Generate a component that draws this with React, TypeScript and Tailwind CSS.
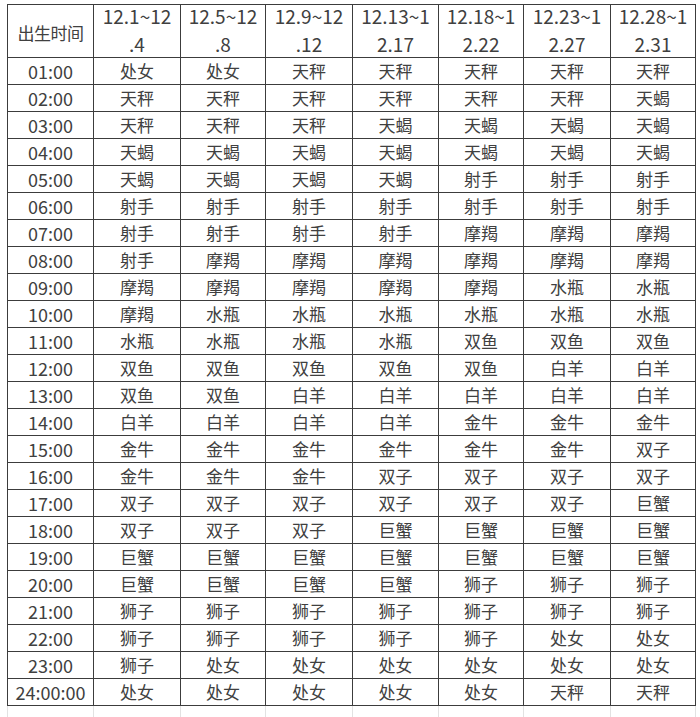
import React from 'react';

const headers = [
  ['12.1~12', '.4'],
  ['12.5~12', '.8'],
  ['12.9~12', '.12'],
  ['12.13~1', '2.17'],
  ['12.18~1', '2.22'],
  ['12.23~1', '2.27'],
  ['12.28~1', '2.31'],
];

const rows: [string, string[]][] = [
  ['01:00', ['处女', '处女', '天秤', '天秤', '天秤', '天秤', '天秤']],
  ['02:00', ['天秤', '天秤', '天秤', '天秤', '天秤', '天秤', '天蝎']],
  ['03:00', ['天秤', '天秤', '天秤', '天蝎', '天蝎', '天蝎', '天蝎']],
  ['04:00', ['天蝎', '天蝎', '天蝎', '天蝎', '天蝎', '天蝎', '天蝎']],
  ['05:00', ['天蝎', '天蝎', '天蝎', '天蝎', '射手', '射手', '射手']],
  ['06:00', ['射手', '射手', '射手', '射手', '射手', '射手', '射手']],
  ['07:00', ['射手', '射手', '射手', '射手', '摩羯', '摩羯', '摩羯']],
  ['08:00', ['射手', '摩羯', '摩羯', '摩羯', '摩羯', '摩羯', '摩羯']],
  ['09:00', ['摩羯', '摩羯', '摩羯', '摩羯', '摩羯', '水瓶', '水瓶']],
  ['10:00', ['摩羯', '水瓶', '水瓶', '水瓶', '水瓶', '水瓶', '水瓶']],
  ['11:00', ['水瓶', '水瓶', '水瓶', '水瓶', '双鱼', '双鱼', '双鱼']],
  ['12:00', ['双鱼', '双鱼', '双鱼', '双鱼', '双鱼', '白羊', '白羊']],
  ['13:00', ['双鱼', '双鱼', '白羊', '白羊', '白羊', '白羊', '白羊']],
  ['14:00', ['白羊', '白羊', '白羊', '白羊', '金牛', '金牛', '金牛']],
  ['15:00', ['金牛', '金牛', '金牛', '金牛', '金牛', '金牛', '双子']],
  ['16:00', ['金牛', '金牛', '金牛', '双子', '双子', '双子', '双子']],
  ['17:00', ['双子', '双子', '双子', '双子', '双子', '双子', '巨蟹']],
  ['18:00', ['双子', '双子', '双子', '巨蟹', '巨蟹', '巨蟹', '巨蟹']],
  ['19:00', ['巨蟹', '巨蟹', '巨蟹', '巨蟹', '巨蟹', '巨蟹', '巨蟹']],
  ['20:00', ['巨蟹', '巨蟹', '巨蟹', '巨蟹', '狮子', '狮子', '狮子']],
  ['21:00', ['狮子', '狮子', '狮子', '狮子', '狮子', '狮子', '狮子']],
  ['22:00', ['狮子', '狮子', '狮子', '狮子', '狮子', '处女', '处女']],
  ['23:00', ['狮子', '处女', '处女', '处女', '处女', '处女', '处女']],
  ['24:00:00', ['处女', '处女', '处女', '处女', '处女', '天秤', '天秤']],
];

const widths = ['w-[86px]', 'w-[87px]', 'w-[85px]', 'w-[87px]', 'w-[86px]', 'w-[85px]', 'w-[87px]', 'w-[85px]'];

export default function App() {
  return (
    <div className="w-[700px] h-[717px] bg-white overflow-hidden pt-[4px] pl-[7px] text-[#404040] font-['Noto_Sans_CJK_SC','Noto_Sans',sans-serif]">
      <table className="table-fixed border-collapse w-[688px]">
        <colgroup>
          {widths.map((w, i) => (
            <col key={i} className={w} />
          ))}
        </colgroup>
        <thead>
          <tr className="h-[53px]">
            <th className="border-[1.5px] border-[#3c3c3c] font-normal text-[17px] tracking-[-0.5px] p-0 pt-[3px]">出生时间</th>
            {headers.map(([a, b]) => (
              <th key={a} className="border-[1.5px] border-[#3c3c3c] font-normal text-[19px] p-0 align-top">
                <div className="flex flex-col items-center gap-[6px]">
                  <div className="h-[22px] leading-[22px]">{a}</div>
                  <div className="h-[22px] leading-[22px]">{b}</div>
                </div>
              </th>
            ))}
          </tr>
        </thead>
        <tbody>
          {rows.map(([time, signs]) => (
            <tr key={time} className="h-[27px]">
              <td className="border-[1.5px] border-[#3c3c3c] text-center text-[18px] leading-[22px] p-0">{time}</td>
              {signs.map((s, i) => (
                <td key={i} className="border-[1.5px] border-[#3c3c3c] text-center text-[17px] leading-[22px] p-0">
                  {s}
                </td>
              ))}
            </tr>
          ))}
        </tbody>
      </table>
      <div className="flex h-[12px]">
        {widths.map((w, i) => (
          <div key={i} className={`${w} border-l border-[#e2e2e2]`} />
        ))}
        <div className="border-l border-[#e2e2e2]" />
      </div>
    </div>
  );
}
